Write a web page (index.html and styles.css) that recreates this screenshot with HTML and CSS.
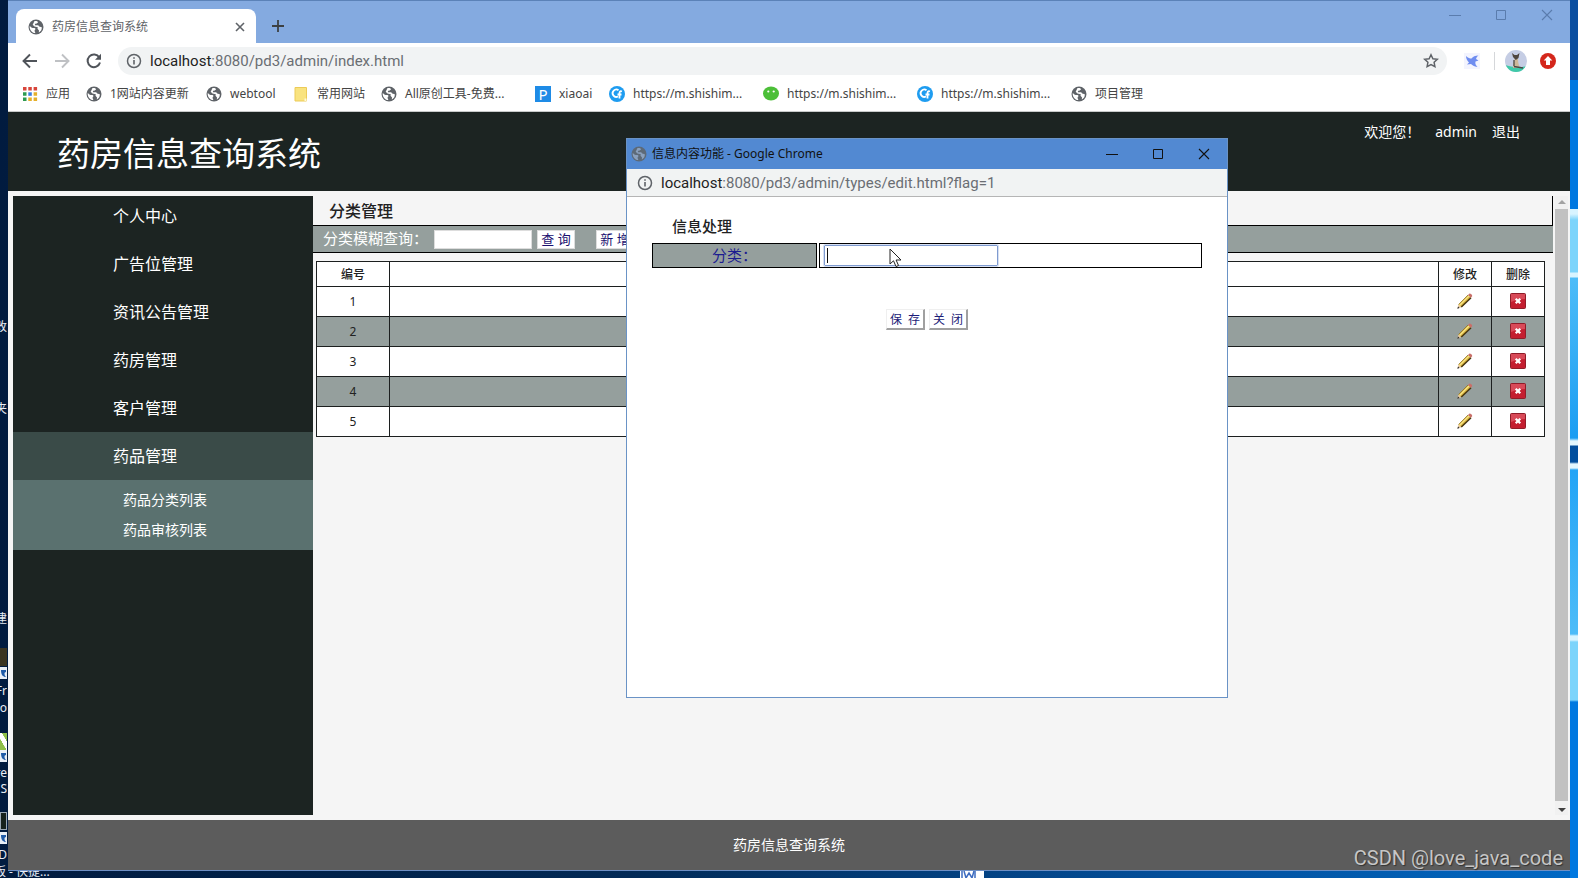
FILE: index.html
```html
<!DOCTYPE html>
<html lang="zh-CN">
<head>
<meta charset="utf-8">
<title>药房信息查询系统</title>
<link rel="stylesheet" href="styles.css">
</head>
<body>
<svg class="defs" aria-hidden="true">
  <symbol id="globe" viewBox="0 0 16 16"><circle cx="8" cy="8" r="7.5" fill="#5f6368"/><path d="M1.6 7.2c1.3.2 1.8 1.6 3.2 1.8 1 .1 2.4-.2 2.6.8.2 1-.9 1.200-.8 2.200.1.8.6 1.300.8 2.100C4.400 14 1.700 11.500 1.600 7.200zM6.500 2c2.200-.3 3 .3 3.600 1.200L8.800 4.500 7.200 4.800 6.800 6.300h3.400l1 1.300 2.600.6c.2 2.300-1 4.300-3 5.300l.2-2-1.500-1.800.3-1.500-3.300-.7L4.700 5.700z" fill="#fff"/></symbol>
  <symbol id="info" viewBox="0 0 16 16"><circle cx="8" cy="8" r="6.500" fill="none" stroke="#5f6368" stroke-width="1.500"/><path d="M8 7v4.500M8 4.300v1.500" stroke="#5f6368" stroke-width="1.600"/></symbol>
  <symbol id="cf" viewBox="0 0 16 16"><circle cx="8" cy="8" r="8" fill="#1e9cf0"/><path d="M9.500 4.200A3.700 3.700 0 1 0 9 10.500M13 5.500c-2-.8-2.500.3-2.500 2v5M8.500 8.500h4" fill="none" stroke="#fff" stroke-width="1.800"/></symbol>
  <symbol id="min" viewBox="0 0 12 12"><path d="M0 6.500h12" stroke="currentColor"/></symbol>
  <symbol id="max" viewBox="0 0 12 12"><path d="M1.500 1.500h9v9h-9z" fill="none" stroke="currentColor"/></symbol>
  <symbol id="close" viewBox="0 0 12 12"><path d="M1 1l10 10M11 1L1 11" stroke="currentColor" stroke-width="1.100"/></symbol>
  <symbol id="pencil" viewBox="0 0 16 16"><path d="M.5 15.500l1-4 3 2.800z" fill="#e9c9a0"/><path d="M.3 15.700l.7-2.200 1.500 1.400z" fill="#222"/><path d="M1.500 11.500L11 2l3 2.800-9.500 9.500z" fill="#d9b43c"/><path d="M2.500 12.500L12 3" stroke="#f8e48a" stroke-width="1.200"/><path d="M4.300 14L14 4.700" stroke="#453413" stroke-width="1.500"/><path d="M1.500 11.500L11 2" stroke="#8a6a20" stroke-width=".7"/><path d="M11 2l1.300-1.300c.8-.8 3.600 1.600 2.800 2.600L14 4.800z" fill="#c9706a"/></symbol>
  <symbol id="delete" viewBox="0 0 16 16"><rect x=".5" y=".5" width="15" height="15" rx="1" fill="#c41e30" stroke="#8f1c28"/><path d="M1 1h14v5c-5 0-9 1-14 3z" fill="#d84a58"/><path d="M5.700 5.700l4.600 4.600M10.300 5.700l-4.600 4.600" stroke="#fff" stroke-width="2.200"/></symbol>
  <symbol id="shortcut" viewBox="0 0 7 12"><path d="M0 0h7v12H0z" fill="#e8eef6"/><path d="M1 3h5v2C4 5 4 8 6 10 3 10 1 8 1 3z" fill="#1f5ba8"/></symbol>
</svg>

<div class="desktop">
  <div class="wallpaper"></div>
  <span class="desk-text t1">改</span>
  <span class="desk-text t2">件夹</span>
  <span class="desk-text t3">建</span>
  <span class="desk-icon i1"></span>
  <svg class="desk-link l1"><use href="#shortcut"/></svg>
  <span class="desk-text t4">Fr</span>
  <span class="desk-text t5">o</span>
  <span class="desk-icon i2"></span>
  <svg class="desk-link l2"><use href="#shortcut"/></svg>
  <span class="desk-text t6">re</span>
  <span class="desk-text t7">S</span>
  <span class="desk-icon i3"></span>
  <svg class="desk-link l3"><use href="#shortcut"/></svg>
  <span class="desk-text t8">ID</span>
  <span class="desk-text t9">板 - 快捷...</span>
  <svg class="desk-doc" viewBox="0 0 24 8"><path d="M0 0h24v8H0z" fill="#fff"/><path d="M2 0v8M15 0v8" stroke="#3d6cc0" stroke-width="1.500"/><path d="M4 1l2 7 3-5 3 5 2-7" fill="none" stroke="#3d6cc0" stroke-width="1.500"/></svg>

  <main class="browser">
    <div class="titlebar">
      <div class="tab">
        <svg class="ico16"><use href="#globe"/></svg>
        <span class="tab-title">药房信息查询系统</span>
        <button class="plain tab-close" aria-label="关闭标签页"><svg class="ico12" viewBox="0 0 12 12"><path d="M2 2l8 8M10 2l-8 8" stroke="currentColor" stroke-width="1.600"/></svg></button>
      </div>
      <button class="plain newtab" aria-label="新标签页"><svg class="ico12" viewBox="0 0 12 12"><path d="M6 0v12M0 6h12" stroke="#3c4043" stroke-width="1.800"/></svg></button>
      <div class="controls">
        <button class="plain" aria-label="最小化"><svg class="ico12"><use href="#min"/></svg></button>
        <button class="plain" aria-label="最大化"><svg class="ico12"><use href="#max"/></svg></button>
        <button class="plain" aria-label="关闭"><svg class="ico12"><use href="#close"/></svg></button>
      </div>
    </div>

    <div class="toolbar">
      <button class="plain nav" aria-label="后退"><svg class="ico16" viewBox="0 0 16 16"><path d="M15 8H2M8 1.500L1.500 8 8 14.500" fill="none" stroke="#50545a" stroke-width="1.900"/></svg></button>
      <button class="plain nav" aria-label="前进"><svg class="ico16" viewBox="0 0 16 16"><path d="M1 8h13M8 1.500L14.500 8 8 14.500" fill="none" stroke="#bfc1c4" stroke-width="1.900"/></svg></button>
      <button class="plain nav" aria-label="重新加载"><svg class="ico16" viewBox="0 0 16 16"><path d="M13.300 4.500A6.300 6.300 0 1 0 14 9.500" fill="none" stroke="#50545a" stroke-width="2"/><path d="M15 .8v6H9z" fill="#50545a"/></svg></button>
      <div class="address">
        <svg class="ico16"><use href="#info"/></svg>
        <span class="url"><b>localhost</b>:8080/pd3/admin/index.html</span>
        <button class="plain" aria-label="收藏"><svg class="ico16" viewBox="0 0 16 16"><path d="M8 1.800l1.900 4 4.400.5-3.200 3 .8 4.400L8 11.600l-3.900 2.100.8-4.400-3.200-3 4.400-.5z" fill="none" stroke="#5f6368" stroke-width="1.500"/></svg></button>
      </div>
      <svg class="ico16 bird" viewBox="0 0 16 16"><path d="M0 0h16v16H0z" fill="#f3f4fe"/><path d="M2 3c2 2 4 2.500 5.500 2.500C9 3.500 11 2.500 14.500 2.500 13 3.500 12.500 4.500 12 6l2.500 1.500-3 1C11 10.500 11.500 12 13.500 14 10 13.500 8 12 7 11l-4 .5 2-2C3.500 8 2 6 2 3z" fill="#6f8df0"/></svg>
      <span class="sep"></span>
      <svg class="avatar" viewBox="0 0 22 22"><clipPath id="av"><circle cx="11" cy="11" r="11"/></clipPath><g clip-path="url(#av)"><path d="M0 0h22v22H0z" fill="#c5cde4"/><path d="M0 15c6 2 14 3 22 1v6H0z" fill="#3fc9a8"/><path d="M8 18c0-5 1-8 2-10l3 1c0 4 1 6 2 9z" fill="#cdb898"/><path d="M7 3l2.500 2h2.500L14.500 3l-1 5-2.700 2L8 7z" fill="#4f463e"/><path d="M9 16.500l9 1.500M9 10v6" stroke="#4a4a48" stroke-width="1.300"/></g></svg>
      <svg class="ico16 update" viewBox="0 0 16 16"><circle cx="8" cy="8" r="8" fill="#d4271c"/><path d="M8 3l4.300 4.600H10V12H6V7.600H3.700z" fill="#fff"/></svg>
    </div>

    <nav class="bookmarks">
      <a href="#"><svg class="ico16" viewBox="0 0 16 16"><g fill="#d8453b"><path d="M1 1h3.500v3.500H1zM6.300 1h3.500v3.500H6.300zM11.600 1h3.500v3.500h-3.500z"/></g><path d="M1 6.300h3.500v3.500H1zM1 11.600h3.500v3.500H1z" fill="#2e9a50"/><path d="M6.300 6.300h3.500v3.500H6.300z" fill="#3b7de0"/><path d="M11.600 6.300h3.500v3.500h-3.500zM6.300 11.600h3.500v3.500H6.300zM11.600 11.600h3.500v3.500h-3.500z" fill="#e5b02a"/></svg>应用</a>
      <a href="#"><svg class="ico16"><use href="#globe"/></svg>1网站内容更新</a>
      <a href="#"><svg class="ico16"><use href="#globe"/></svg>webtool</a>
      <a href="#"><svg class="ico16" viewBox="0 0 16 16"><path d="M2 1.500h11.500v13.500H2z" fill="#f9e37f" stroke="#eccb58"/><path d="M11.500 12.500h2V15h-2z" fill="#fff8d8"/></svg>常用网站</a>
      <a href="#"><svg class="ico16"><use href="#globe"/></svg>All原创工具-免费...</a>
      <a href="#"><span class="letter">P</span>xiaoai</a>
      <a href="#"><svg class="ico16"><use href="#cf"/></svg>https://m.shishim...</a>
      <a href="#"><svg class="ico16" viewBox="0 0 16 16"><ellipse cx="8" cy="7.500" rx="8" ry="6.900" fill="#4cbf38"/><circle cx="5.300" cy="5.500" r="1.100" fill="#fff"/><circle cx="10.700" cy="5.500" r="1.100" fill="#fff"/></svg>https://m.shishim...</a>
      <a href="#"><svg class="ico16"><use href="#cf"/></svg>https://m.shishim...</a>
      <a href="#"><svg class="ico16"><use href="#globe"/></svg>项目管理</a>
    </nav>

    <header class="site-head">
      <h1>药房信息查询系统</h1>
      <div class="account"><span>欢迎您！</span><span class="who">admin</span><a href="#">退出</a></div>
    </header>

    <div class="site-body">
      <nav class="side">
        <a class="first" href="#">个人中心</a>
        <a href="#">广告位管理</a>
        <a href="#">资讯公告管理</a>
        <a href="#">药房管理</a>
        <a href="#">客户管理</a>
        <a class="active" href="#">药品管理</a>
        <div class="sub">
          <a href="#">药品分类列表</a>
          <a href="#">药品审核列表</a>
        </div>
      </nav>
      <section class="content">
        <h2>分类管理</h2>
        <form class="search">
          <label for="q">分类模糊查询：</label>
          <input id="q" type="text">
          <button type="button">查 询</button>
          <button class="add" type="button">新 增</button>
        </form>
        <table class="list">
          <colgroup><col class="c-no"><col><col class="c-act"><col class="c-act"></colgroup>
          <thead><tr><th>编号</th><th></th><th>修改</th><th>删除</th></tr></thead>
          <tbody>
            <tr><td>1</td><td></td><td><svg class="ico16"><use href="#pencil"/></svg></td><td><svg class="ico16"><use href="#delete"/></svg></td></tr>
            <tr><td>2</td><td></td><td><svg class="ico16"><use href="#pencil"/></svg></td><td><svg class="ico16"><use href="#delete"/></svg></td></tr>
            <tr><td>3</td><td></td><td><svg class="ico16"><use href="#pencil"/></svg></td><td><svg class="ico16"><use href="#delete"/></svg></td></tr>
            <tr><td>4</td><td></td><td><svg class="ico16"><use href="#pencil"/></svg></td><td><svg class="ico16"><use href="#delete"/></svg></td></tr>
            <tr><td>5</td><td></td><td><svg class="ico16"><use href="#pencil"/></svg></td><td><svg class="ico16"><use href="#delete"/></svg></td></tr>
          </tbody>
        </table>
      </section>
      <div class="scroll">
        <svg viewBox="0 0 8 4"><path d="M0 4l4-4 4 4z" fill="#a3a3a3"/></svg>
        <span class="thumb"></span>
        <svg class="down" viewBox="0 0 8 4"><path d="M0 0l4 4 4-4z" fill="#404040"/></svg>
      </div>
    </div>
    <footer class="site-foot">药房信息查询系统</footer>
  </main>

  <section class="popup">
    <div class="pop-title">
      <svg class="ico16" viewBox="0 0 16 16"><circle cx="8" cy="8" r="7.5" fill="#5d6a78"/><path d="M1.600 7.200c1.300.2 1.800 1.600 3.200 1.800 1 .1 2.400-.2 2.600.8.2 1-.9 1.200-.8 2.200.1.8.6 1.300.8 2.100C4.400 14 1.700 11.500 1.600 7.200zM6.500 2c2.200-.3 3 .3 3.600 1.200L8.800 4.500 7.200 4.800 6.800 6.300h3.400l1 1.300 2.600.6c.2 2.300-1 4.300-3 5.300l.2-2-1.500-1.800.3-1.500-3.300-.7L4.700 5.700z" fill="#8aa0bd"/></svg>
      <span class="pop-name">信息内容功能 - Google Chrome</span>
      <button class="plain" aria-label="最小化"><svg class="ico12"><use href="#min"/></svg></button>
      <button class="plain" aria-label="最大化"><svg class="ico12"><use href="#max"/></svg></button>
      <button class="plain" aria-label="关闭"><svg class="ico12"><use href="#close"/></svg></button>
    </div>
    <div class="pop-url">
      <svg class="ico16"><use href="#info"/></svg>
      <span class="url"><b>localhost</b>:8080/pd3/admin/types/edit.html?flag=1</span>
    </div>
    <form class="pop-form">
      <h3>信息处理</h3>
      <div class="row">
        <label for="kind">分类：</label>
        <div class="field"><input id="kind" type="text"></div>
      </div>
      <div class="actions"><button type="button">保&ensp;存</button><button type="button">关&ensp;闭</button></div>
    </form>
  </section>
  <svg class="cursor" viewBox="0 0 13 20"><path d="M1 1v15l3.500-3.200L7 18.500l2.500-1-2.400-5.500H12z" fill="#fff" stroke="#222"/></svg>
  <span class="watermark">CSDN @love_java_code</span>
</div>
</body>
</html>
```
FILE: styles.css
```css
* { box-sizing: border-box; }
html, body { height: 100%; }
body {
  margin: 0;
  overflow: hidden;
  font: 12px/16px "Noto Sans", "Noto Sans CJK SC", sans-serif;
  color: #222;
}
h1, h2, h3 { margin: 0; }
a { color: inherit; text-decoration: none; }
svg { display: block; flex: none; }
input, button { font: inherit; }
.defs { position: absolute; width: 0; height: 0; }
.ico16 { width: 16px; height: 16px; }
.ico12 { width: 12px; height: 12px; }
.plain { display: flex; align-items: center; justify-content: center; padding: 0; border: 0; background: none; color: inherit; }

.desktop {
  position: relative;
  height: 100vh;
  overflow: hidden;
  padding: 0 8px;
  padding-bottom: 7px;
  background: linear-gradient(90deg, #011b3f 0%, #022a56 40%, #04509c 75%, #0068c4 100%);
}
.wallpaper {
  position: absolute;
  top: 0; right: 0; bottom: 0;
  width: 8px;
  background: linear-gradient(#0a4ea0 0 80px, #0078e0 80px 209px, #d8f4ff 209px 214px, #7cd4fb 220px 272px, #d8f4ff 273px 277px, #4dbcf8 278px, #1b9df2 438px, #e4f8ff 441px 445px, #024f9e 446px 462px, #e4f8ff 464px 468px, #23a4f6 470px, #4dbcf8 634px, #d8f4ff 636px 640px, #7cd4fb 642px 700px, #0078e0 702px 100%);
}
.desk-text { position: absolute; left: 0; width: 7px; overflow: hidden; direction: rtl; color: #e8edf5; white-space: nowrap; }
.t1 { top: 319px; }
.t2 { top: 401px; }
.t3 { top: 611px; }
.t4 { top: 683px; }
.t5 { top: 700px; }
.t6 { top: 765px; }
.t7 { top: 781px; }
.t8 { top: 847px; }
.t9 { left: -6px; top: 864px; width: auto; direction: ltr; }
.desk-icon { position: absolute; left: 0; width: 7px; height: 18px; }
.i1 { top: 648px; background: #3a3420; }
.i2 { top: 733px; background: linear-gradient(60deg, #8fc04a 40%, #fff 42% 70%, #8fc04a 72%); }
.i3 { top: 812px; border: 1px solid #9aa7b5; background: #16211c; }
.desk-link { position: absolute; left: 0; width: 7px; height: 12px; }
.l1 { top: 667px; }
.l2 { top: 750px; }
.l3 { top: 832px; }
.desk-doc { position: absolute; left: 960px; bottom: 0; width: 24px; height: 8px; }

.browser {
  position: relative;
  height: 100%;
  display: flex;
  flex-direction: column;
  background: #fff;
  border-top: 1px solid #5b82b8;
  border-bottom: 1px solid #6e8fc4;
}
.titlebar { display: flex; height: 42px; padding: 8px 0 0 8px; background: #84aae0; color: #5a7cad; }
.tab {
  display: flex; align-items: center; gap: 8px;
  width: 240px; padding: 2px 10px 0 12px;
  border-radius: 8px 8px 0 0;
  background: #fff; color: #5f6368;
}
.tab-title { flex: 1; }
.newtab { width: 28px; margin-left: 8px; }
.controls { display: flex; align-self: flex-start; margin-left: auto; }
.controls .plain { width: 46px; height: 12px; }

.toolbar { display: flex; align-items: center; height: 36px; padding-left: 6px; }
.nav { width: 32px; height: 28px; }
.address { flex: 1; display: flex; align-items: center; height: 28px; margin-left: 8px; padding: 0 8px; border-radius: 14px; background: #f1f3f4; }
.url { flex: 1; margin-left: 8px; font-family: Roboto, "Noto Sans", sans-serif; font-size: 15px; line-height: 20px; color: #6a6e73; }
.url b { font-weight: 400; color: #222; }
.bird { margin: 0 14px 0 17px; }
.sep { width: 1px; height: 18px; background: #d5d7da; }
.avatar { width: 22px; height: 22px; margin: 0 13px 0 10px; }
.update { margin-right: 14px; }

.bookmarks {
  display: grid;
  grid-template-columns: 64px 120px 87px 88px 154px 74px 154px 154px 154px auto;
  align-items: center;
  height: 33px;
  padding: 0 0 3px 14px;
  border-bottom: 1px solid #c8caca;
  color: #444;
}
.bookmarks a { display: flex; align-items: center; gap: 8px; white-space: nowrap; }
.letter { width: 16px; height: 16px; background: #1e8be6; color: #fff; font-size: 15px; text-align: center; }

.site-head { display: flex; justify-content: space-between; height: 79px; padding: 0 50px 0 49px; background: #1c2422; color: #fff; }
.site-head h1 { font-size: 33px; line-height: 84px; font-weight: 400; }
.account { display: flex; padding-top: 10px; font-size: 14px; line-height: 20px; }
.who { margin: 0 15px; }

.site-body { flex: 1; min-height: 0; display: flex; padding: 5px 2px 5px 5px; background: #f5f5f5; }
.side { width: 300px; flex: none; background: #1c2422; color: #fff; font-size: 16px; }
.side a { display: block; padding-left: 100px; line-height: 48px; }
.side .first { height: 44px; line-height: 40px; }
.side .active { background: #3a4b48; }
.side .sub { padding: 5px 0; background: #5a716f; font-size: 14px; }
.side .sub a { padding-left: 110px; line-height: 30px; }

.content { flex: 1; min-width: 0; }
.content h2 { height: 30px; padding-left: 16px; border: solid #000; border-width: 0 1px 1px 0; font-size: 16px; line-height: 30px; font-weight: 500; }
.search { display: flex; align-items: center; height: 27px; padding-left: 10px; border-bottom: 1px solid #000; background: #959f9d; color: #fff; }
.search label { width: 111px; font-size: 15px; line-height: 20px; padding-bottom: 2px; white-space: nowrap; }
.search input { width: 98px; height: 19px; margin-right: 5px; padding: 0; border: 1px solid #ddd; background: #fff; }
.search button { width: 38px; height: 19px; padding: 0; border: 1px solid #ddd; background: #fff; color: #1a1070; font-size: 13px; line-height: 17px; white-space: nowrap; }
.search .add { margin-left: 21px; }

.list { width: calc(100% - 11px); margin: 8px 8px 0 3px; table-layout: fixed; border-collapse: collapse; background: #fff; text-align: center; }
.list th, .list td { padding: 0; height: 30px; border: 1px solid #1c1f1f; }
.list th { height: 25px; padding-top: 1px; font-weight: 500; }
.list td:nth-child(n+3) { padding-bottom: 2px; }
.list svg { margin: 0 auto; }
.list tbody tr:nth-child(even) { background: #959f9d; }
.c-no { width: 73px; }
.c-act { width: 53px; }

.scroll { display: flex; flex-direction: column; align-items: center; width: 13px; margin-left: 2px; background: #f1f1f1; }
.scroll svg { width: 8px; height: 4px; margin: 4px 0 5px; }
.scroll .down { margin: 7px 0 3px; }
.thumb { flex: 1; align-self: stretch; background: #c1c1c1; }

.site-foot { flex: none; height: 50px; background: #5c5c5c; color: #fff; font-size: 14px; line-height: 50px; text-align: center; }

.popup { position: absolute; left: 626px; top: 138px; width: 602px; height: 560px; border: 1px solid #6a93c6; background: #fff; }
.pop-title { display: flex; align-items: center; height: 30px; padding-left: 4px; background: #5289d2; color: #111; }
.pop-name { flex: 1; margin-left: 5px; }
.pop-title .plain { width: 46px; height: 30px; }
.pop-url { display: flex; align-items: center; height: 28px; padding-left: 10px; border-bottom: 1px solid #b5b5b5; background: #f1f3f3; }
.pop-form { padding: 19px 25px; }
.pop-form h3 { padding-left: 20px; font-size: 15px; line-height: 20px; font-weight: 500; }
.row { display: flex; gap: 2px; margin-top: 7px; }
.row label { width: 165px; height: 25px; border: 1px solid #000; background: #959f9d; color: #1c1c90; font-size: 15px; line-height: 23px; text-align: center; }
.field { flex: 1; height: 25px; padding: 1px 4px; border: 1px solid #000; }
.field input { display: block; width: 174px; height: 21px; padding: 0; border: 1px solid #7f9bd0; border-radius: 1px; outline: 1px solid #d7e0f2; background: linear-gradient(#111, #111) 2px 2px / 1px 15px no-repeat #fff; }
.actions { display: flex; justify-content: center; gap: 4px; margin-top: 41px; }
.actions button { width: 39px; height: 21px; padding: 1px 0 0; border: solid; border-width: 1px 2px 2px 1px; border-color: #efefef #a0a0a0 #a0a0a0 #efefef; background: #fff; color: #1c1c78; white-space: nowrap; }
.cursor { position: absolute; left: 889px; top: 248px; width: 13px; height: 20px; }
.watermark { position: absolute; right: 15px; bottom: 8px; font: 20px/24px Roboto, sans-serif; color: #c6c6c6; text-shadow: 1px 1px 1px #333; }
```
